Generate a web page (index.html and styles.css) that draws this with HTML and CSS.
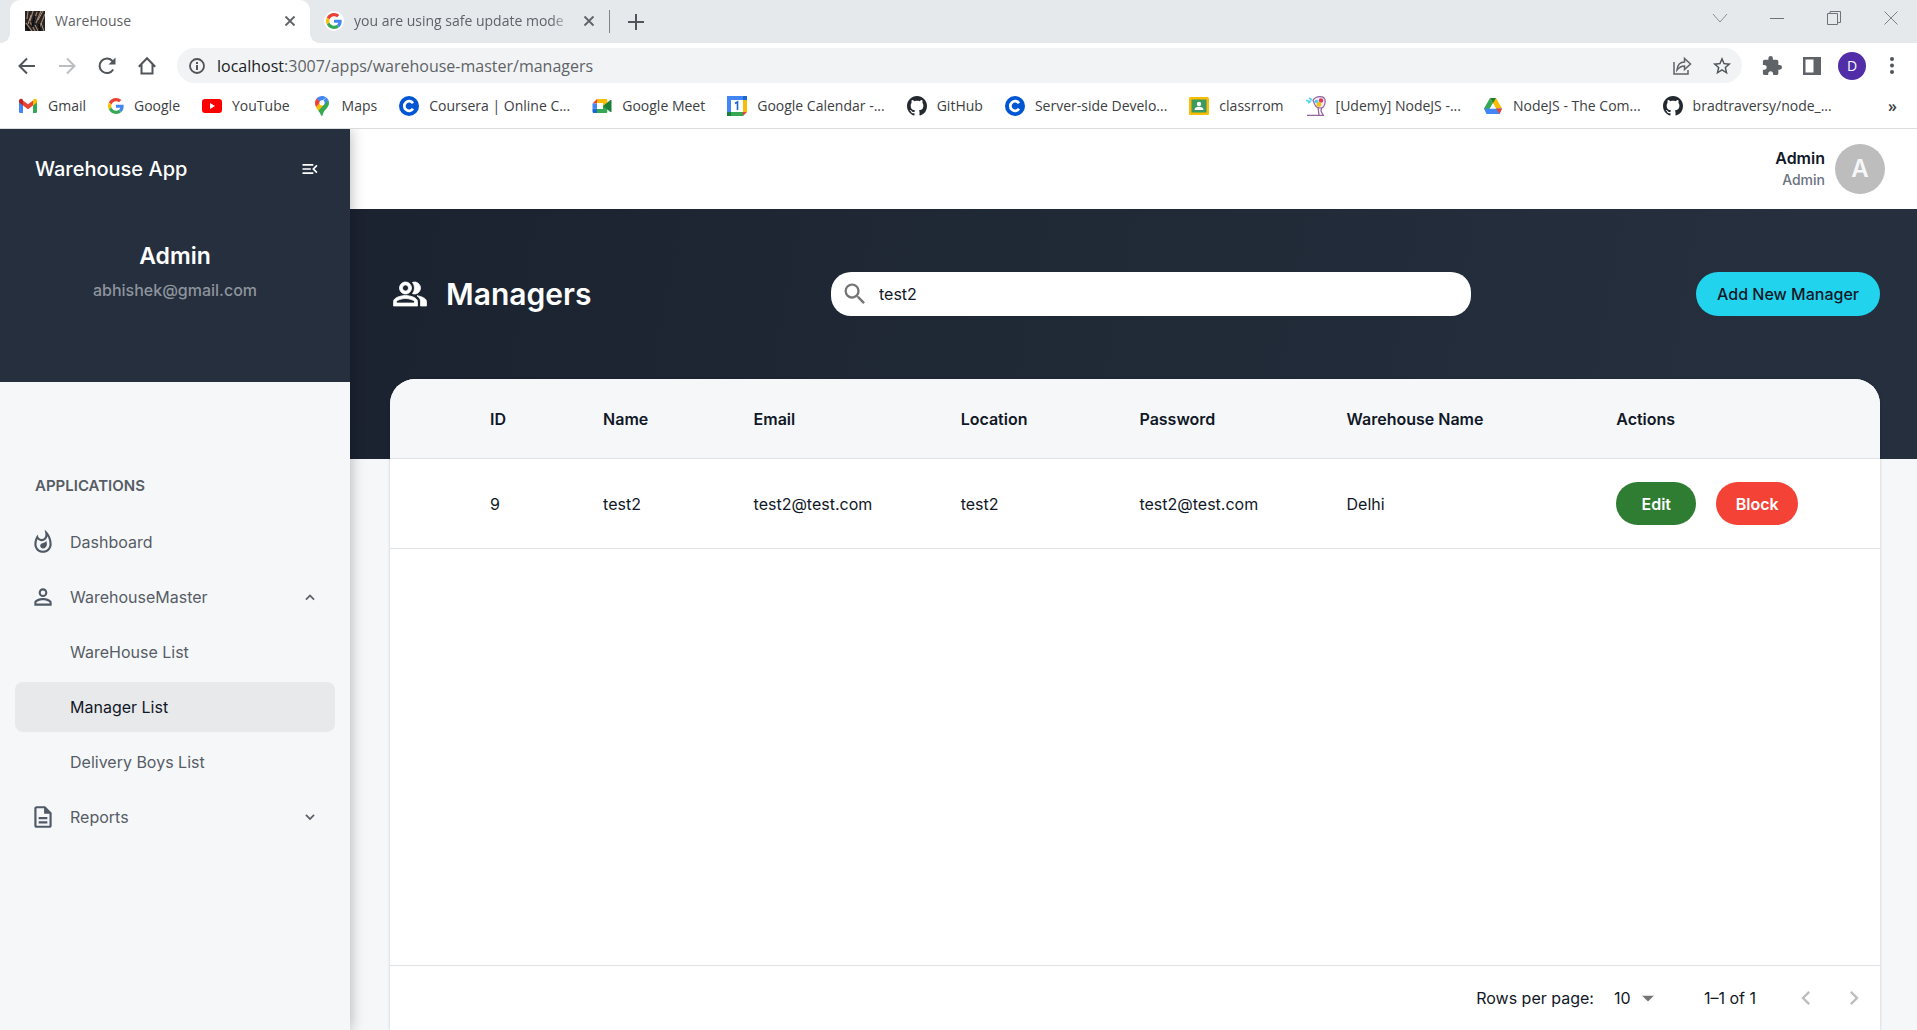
FILE: index.html
```html
<!DOCTYPE html>
<html lang="en">
<head>
<meta charset="utf-8">
<title>WareHouse</title>
<meta name="viewport" content="width=device-width, initial-scale=1">
<link rel="stylesheet" href="styles.css">
</head>
<body>
<svg class="defs" aria-hidden="true">
  <symbol id="i-google" viewBox="0 0 48 48">
    <path fill="#ea4335" d="M24 9.500c3.540 0 6.710 1.220 9.210 3.600l6.850-6.850C35.900 2.380 30.470 0 24 0 14.620 0 6.510 5.380 2.560 13.220l7.980 6.190C12.430 13.720 17.740 9.500 24 9.500z"/>
    <path fill="#4285f4" d="M46.980 24.550c0-1.570-.15-3.090-.38-4.550H24v9.020h12.940c-.58 2.960-2.260 5.480-4.780 7.180l7.730 6c4.510-4.180 7.090-10.360 7.090-17.650z"/>
    <path fill="#fbbc05" d="M10.530 28.590c-.48-1.450-.76-2.990-.76-4.590s.27-3.140.76-4.590l-7.980-6.190C.92 16.460 0 20.120 0 24c0 3.880.92 7.540 2.560 10.780l7.970-6.190z"/>
    <path fill="#34a853" d="M24 48c6.480 0 11.930-2.130 15.890-5.810l-7.730-6c-2.150 1.450-4.920 2.300-8.160 2.300-6.260 0-11.570-4.220-13.470-9.910l-7.980 6.190C6.510 42.620 14.620 48 24 48z"/>
  </symbol>
  <symbol id="i-coursera" viewBox="0 0 20 20">
    <circle cx="10" cy="10" r="10" fill="#0056d2"/>
    <path d="M14 7.200A4.800 4.800 0 1 0 14 12.800" fill="none" stroke="#fff" stroke-width="2.800"/>
  </symbol>
  <symbol id="i-github" viewBox="0 0 16 16">
    <path fill="#24292f" d="M8 0C3.580 0 0 3.580 0 8c0 3.540 2.290 6.530 5.470 7.590.4.070.55-.17.55-.38 0-.19-.01-.82-.01-1.490-2.010.37-2.530-.49-2.690-.94-.09-.23-.48-.94-.82-1.130-.28-.15-.68-.52-.01-.53.63-.01 1.080.58 1.230.82.72 1.210 1.870.87 2.330.66.07-.52.28-.87.51-1.070-1.780-.2-3.640-.89-3.640-3.950 0-.87.31-1.590.82-2.150-.08-.2-.36-1.020.08-2.120 0 0 .67-.21 2.200.82.64-.18 1.320-.27 2-.27s1.360.09 2 .27c1.530-1.040 2.200-.82 2.200-.82.44 1.100.16 1.920.08 2.120.51.56.82 1.270.82 2.150 0 3.070-1.870 3.750-3.650 3.950.29.25.54.73.54 1.480 0 1.070-.01 1.930-.01 2.200 0 .21.15.46.55.38A8.010 8.010 0 0 0 16 8c0-4.420-3.580-8-8-8z"/>
  </symbol>
  <symbol id="i-x" viewBox="0 0 12 12"><path d="M1.500 1.500l9 9M10.500 1.500l-9 9" fill="none" stroke="#5f6368" stroke-width="1.800"/></symbol>
</svg>

<header class="browser">
  <div class="tabs">
    <div class="tab tab-active">
      <svg class="ic20" viewBox="0 0 20 20"><rect width="20" height="20" fill="#2b2320"/><path d="M3 0l-1 8M8 0L5 10M12 1L8 13M16 0l-5 12M20 3l-6 15M1 12l6 8M5 11l5 9" stroke="#9a8474" stroke-width="1.200"/><path d="M6 4l-3 9M18 0l-5 9M10 14l3 6M16 12l3 8" stroke="#c9b6a2" stroke-width=".8"/><path d="M0 14l4 6M10 5L7 16M14 13l1 7" stroke="#0d0f16" stroke-width="2"/></svg>
      <span class="tab-title">WareHouse</span>
      <button class="plain" aria-label="Close tab"><svg class="ic12"><use href="#i-x"/></svg></button>
    </div>
    <div class="tab">
      <span class="tab-g"><svg class="ic16"><use href="#i-google"/></svg></span>
      <span class="tab-title fade">you are using safe update mode</span>
      <button class="plain" aria-label="Close tab"><svg class="ic12"><use href="#i-x"/></svg></button>
    </div>
    <button class="plain new-tab" aria-label="New tab"><svg class="ic16" viewBox="0 0 16 16"><path d="M8 0v16M0 8h16" stroke="#50555a" stroke-width="2"/></svg></button>
    <div class="win">
      <button class="plain" aria-label="Search tabs"><svg class="ic16" viewBox="0 0 16 16"><path d="M1 4l7 8 7-8" fill="none" stroke="#8b8f93"/></svg></button>
      <button class="plain" aria-label="Minimize"><svg class="ic16" viewBox="0 0 16 16"><path d="M1 8.500h14" stroke="#6f7377"/></svg></button>
      <button class="plain" aria-label="Restore"><svg class="ic16" viewBox="0 0 16 16"><path d="M1.500 3.500h10v11h-10zM4 3.500v-2h10.500v11h-3" fill="none" stroke="#6f7377"/></svg></button>
      <button class="plain" aria-label="Close"><svg class="ic16" viewBox="0 0 16 16"><path d="M1.500 1.500l13 13M14.500 1.500l-13 13" stroke="#7d8185"/></svg></button>
    </div>
  </div>

  <div class="toolbar">
    <button class="plain" aria-label="Back"><svg class="ic20" viewBox="0 0 20 20"><path d="M18 10H3M10 2.500L2.500 10l7.500 7.500" fill="none" stroke="#50555a" stroke-width="2"/></svg></button>
    <button class="plain" aria-label="Forward"><svg class="ic20" viewBox="0 0 20 20"><path d="M2 10h15M10 2.500l7.500 7.500-7.500 7.500" fill="none" stroke="#bcbfc2" stroke-width="2"/></svg></button>
    <button class="plain" aria-label="Reload"><svg class="ic20" viewBox="0 0 20 20"><path d="M16.200 13.500A7.300 7.300 0 1 1 15.600 5.200" fill="none" stroke="#50555a" stroke-width="2"/><path d="M18.500 1.500v7h-7z" fill="#50555a"/></svg></button>
    <button class="plain" aria-label="Home"><svg class="ic20" viewBox="0 0 20 20"><path d="M1.800 10.800L10 2.200l8.200 8.600M4.500 8.500v9h11v-9" fill="none" stroke="#50555a" stroke-width="2"/></svg></button>
    <div class="omnibox">
      <svg class="ic16" viewBox="0 0 16 16"><circle cx="8" cy="8" r="7" fill="none" stroke="#50555a" stroke-width="1.800"/><path d="M8 7v5M8 4v2" stroke="#50555a" stroke-width="2"/></svg>
      <span class="url"><b>localhost</b>:3007/apps/warehouse-master/managers</span>
      <button class="plain" aria-label="Share"><svg class="ic20" viewBox="0 0 20 20"><path d="M2 6v12h14v-4" fill="none" stroke="#5f6368" stroke-width="1.500"/><path d="M5 14c.5-5 3-8 7.500-8V2.500L18.500 8l-6 5.500V10C9 10 7 11.500 5 14z" fill="none" stroke="#5f6368" stroke-width="1.500"/></svg></button>
      <button class="plain" aria-label="Bookmark this page"><svg class="ic20" viewBox="1 1 22 22"><path fill="#50555a" d="M22 9.240l-7.190-.62L12 2 9.190 8.630 2 9.240l5.460 4.730L5.820 21 12 17.270 18.180 21l-1.630-7.030L22 9.240zM12 15.400l-3.760 2.270 1-4.280-3.320-2.880 4.380-.38L12 6.100l1.710 4.040 4.380.38-3.320 2.880 1 4.280L12 15.400z"/></svg></button>
    </div>
    <button class="plain" aria-label="Extensions"><svg class="ic20" viewBox="1 1 22 22"><path fill="#5f6368" d="M20.500 11H19V7c0-1.100-.9-2-2-2h-4V3.500a2.500 2.500 0 0 0-5 0V5H4c-1.100 0-2 .9-2 2v3.800h1.500c1.500 0 2.700 1.200 2.700 2.700S5 16.200 3.500 16.200H2V20c0 1.100.9 2 2 2h3.800v-1.500c0-1.500 1.200-2.700 2.700-2.700s2.700 1.200 2.700 2.700V22H17c1.100 0 2-.9 2-2v-4h1.500a2.500 2.500 0 0 0 0-5z"/></svg></button>
    <button class="plain" aria-label="Side panel"><svg class="ic20" viewBox="0 0 20 20"><path fill="#5f6368" d="M1 1h18v18H1zM3.500 3.500v13h8v-13z" fill-rule="evenodd"/></svg></button>
    <button class="profile" aria-label="Profile">D</button>
    <button class="plain" aria-label="Menu"><svg class="ic20" viewBox="0 0 20 20"><g fill="#50555a"><circle cx="10" cy="3" r="2"/><circle cx="10" cy="9.500" r="2"/><circle cx="10" cy="16" r="2"/></g></svg></button>
  </div>

  <nav class="bookmarks" aria-label="Bookmarks">
    <a href="#"><svg class="ic20" viewBox="0 0 20 20"><path fill="#4285f4" d="M1 5.500v10.300c0 .7.500 1.200 1.200 1.200H5V8.500z"/><path fill="#34a853" d="M15 8.500V17h2.800c.7 0 1.200-.5 1.200-1.200V5.500z"/><path fill="#ea4335" d="M5 9.500V4.500l5 3.800 5-3.800v5l-5 3.800z"/><path fill="#fbbc04" d="M15 4.500v5l4-3V5c0-1.900-2-2.800-3.500-1.800z"/><path fill="#c5221f" d="M1 5v1.500l4 3v-5l-.5-1.300C3 2.200 1 3.100 1 5z"/></svg>Gmail</a>
    <a href="#"><svg class="ic16"><use href="#i-google"/></svg>Google</a>
    <a href="#"><svg class="ic20" viewBox="0 0 20 20"><rect y="3" width="20" height="14" rx="3" fill="#f00"/><path fill="#fff" d="M8 7l5 3-5 3z"/></svg>YouTube</a>
    <a href="#"><svg class="ic20" viewBox="0 0 20 20"><path fill="#34a853" d="M10 20c.6 0 .8-2 1.500-3.500C13 13.500 17 11 17 7c0-1.200-.3-2.300-.8-3.200L6 14.500c1.300 1.600 2 2.500 2.700 4 .4.900.7 1.500 1.300 1.500z"/><path fill="#fbbc04" d="M4 11c.5 1.200 1.200 2.300 2.300 3.700l6.500-7L8 6z"/><path fill="#ea4335" d="M4.600 2.500C3.600 3.700 3 5.300 3 7c0 1.500.4 2.800 1 4l5-5.500z"/><path fill="#4285f4" d="M4.600 2.500L8.500 6l5.800-4.400C13.100.6 11.600 0 10 0 7.800 0 5.900 1 4.600 2.500z"/><path fill="#4285f4" d="M14.300 1.600L8.500 8l4 1 3.700-5.200c-.5-.9-1.100-1.600-1.900-2.200z"/><circle cx="10" cy="6.800" r="2.600" fill="#fff"/></svg>Maps</a>
    <a href="#"><svg class="ic20"><use href="#i-coursera"/></svg>Coursera | Online C...</a>
    <a href="#"><svg class="ic20" viewBox="0 0 20 20"><path fill="#fbbc04" d="M5 3h9c.8 0 1.300.5 1.300 1.300V9L11 10V7H5z"/><path fill="#ea4335" d="M5 3v4.500H.5z"/><path fill="#4285f4" d="M.5 7.500H5v5H.5z"/><path fill="#1967d2" d="M.5 12.500H5V17H2c-.9 0-1.500-.6-1.500-1.500z"/><path fill="#34a853" d="M5 13h6v-3l4.300-1v6.700c0 .8-.5 1.300-1.300 1.300H5z"/><path fill="#188038" d="M11 10l7.500-6c.4-.3 1-.1 1 .5v11c0 .6-.6.800-1 .5z"/></svg>Google Meet</a>
    <a href="#"><svg class="ic20" viewBox="0 0 20 20"><path fill="#4285f4" d="M0 0h16v4H4v12H0z"/><path fill="#1967d2" d="M16 0h4v4h-4z"/><path fill="#fbbc04" d="M16 4h4v12h-4z"/><path fill="#34a853" d="M4 16h12v4H4z"/><path fill="#188038" d="M0 16h4v4H0z"/><path fill="#ea4335" d="M16 16h4l-4 4z"/><path fill="#fff" d="M4 4h12v12H4z"/><path d="M8 7.500L10.500 6v8" fill="none" stroke="#1967d2" stroke-width="1.600"/></svg>Google Calendar -...</a>
    <a href="#"><svg class="ic20"><use href="#i-github"/></svg>GitHub</a>
    <a href="#"><svg class="ic20"><use href="#i-coursera"/></svg>Server-side Develo...</a>
    <a href="#"><svg class="ic20" viewBox="0 0 20 20"><rect y="1" width="20" height="18" rx="1.500" fill="#fbbc04"/><rect x="2.500" y="3.500" width="15" height="13" fill="#3c9a5f"/><circle cx="10" cy="8" r="2.200" fill="#fff"/><path fill="#fff" d="M5.500 14c0-2.500 2-3.200 4.500-3.200s4.500.7 4.500 3.200z"/></svg>classrrom</a>
    <a href="#"><svg class="ic20" viewBox="0 0 20 20"><path d="M7 4.500C8 1.500 12 0 16 .8c3 .7 3.500 3 3 6-.5 3-2 5-4 5.200-3 .2-5-1-6-3z" fill="#f7eef9" stroke="#94649e" stroke-width="1.200"/><path d="M12 11.500l1 7.500M15.500 12l-.5 3 2 4M1 19.400h17" fill="none" stroke="#94649e" stroke-width="1.300"/><path d="M0 4.500l4 1M3 2l3 2M2 7l3-2" stroke="#4fd4f0" stroke-width="1.600"/><circle cx="15" cy="4.500" r="2.200" fill="#e23b5a"/><circle cx="10.500" cy="5.500" r="1.800" fill="#3ecdf0"/><circle cx="13" cy="8.500" r="2.400" fill="#f4c20d"/></svg>[Udemy] NodeJS -...</a>
    <a href="#"><svg class="ic20" viewBox="0 0 20 20"><path fill="#34a853" d="M7 2L1 12.500 4 17l6-10z"/><path fill="#fbbc04" d="M7 2h6l6 10.500h-6z"/><path fill="#188038" d="M7 2h6l-3 5z"/><path fill="#4285f4" d="M1 12.500h18L16.500 18h-13z"/><path fill="#ea4335" d="M13 12.500h6L16.500 18z"/><path fill="#fff" d="M10 7.500l3 5H7z"/></svg>NodeJS - The Com...</a>
    <a href="#"><svg class="ic20"><use href="#i-github"/></svg>bradtraversy/node_...</a>
    <button class="plain more" aria-label="More bookmarks">»</button>
  </nav>
</header>

<div class="app">
  <aside class="sidebar">
    <div class="side-head">
      <div class="brand">
        <span>Warehouse App</span>
        <button class="plain" aria-label="Collapse menu"><svg class="ic20" viewBox="0 0 24 24"><path fill="#fff" d="M3 18h13v-2H3v2zM3 13h10v-2H3v2zm0-7v2h13V6H3zm18 9.590L17.420 12 21 8.410 19.590 7l-5 5 5 5L21 15.590z"/></svg></button>
      </div>
      <h2>Admin</h2>
      <p>abhishek@gmail.com</p>
    </div>
    <nav class="side-nav">
      <h3>APPLICATIONS</h3>
      <ul>
        <li><a href="#"><svg class="ic26" viewBox="0 0 24 24"><path fill="#4f5a66" d="M11.570 13.160c-1.360.28-2.170 1.160-2.170 2.410 0 1.340 1.110 2.420 2.490 2.420 2.050 0 3.710-1.660 3.710-3.710 0-1.070-.15-2.120-.46-3.120-.79 1.070-2.200 1.720-3.570 2zM13.500.67s.74 2.650.74 4.800c0 2.060-1.350 3.730-3.410 3.730-2.070 0-3.630-1.670-3.630-3.730l.03-.36C5.210 7.510 4 10.620 4 14c0 4.420 3.580 8 8 8s8-3.580 8-8C20 8.610 17.410 3.800 13.500.67zM12 20c-3.310 0-6-2.690-6-6 0-1.530.3-3.040.86-4.430 1.010 1.010 2.410 1.630 3.970 1.630 2.660 0 4.750-1.830 5.280-4.430C17.340 8.970 18 11.440 18 14c0 3.310-2.690 6-6 6z"/></svg><span>Dashboard</span></a></li>
        <li><a href="#"><svg class="ic26" viewBox="0 0 24 24"><path fill="#4f5a66" d="M12 5.900a2.100 2.100 0 1 1 0 4.200 2.100 2.100 0 0 1 0-4.200m0 9c2.970 0 6.100 1.460 6.100 2.100v1.100H5.900V17c0-.64 3.130-2.100 6.100-2.100M12 4C9.790 4 8 5.790 8 8s1.790 4 4 4 4-1.790 4-4-1.790-4-4-4zm0 9c-2.670 0-8 1.340-8 4v3h16v-3c0-2.660-5.330-4-8-4z"/></svg><span>WarehouseMaster</span><svg class="ic16" viewBox="0 0 24 24"><path fill="#5b6168" d="M12 8l-7 7 1.800 1.800L12 11.600l5.200 5.200L19 15z"/></svg></a></li>
        <li><a class="sub" href="#">WareHouse List</a></li>
        <li><a class="sub current" href="#" aria-current="page">Manager List</a></li>
        <li><a class="sub" href="#">Delivery Boys List</a></li>
        <li><a href="#"><svg class="ic26" viewBox="0 0 24 24"><path fill="#4f5a66" d="M8 16h8v2H8zm0-4h8v2H8zm6-10H6c-1.100 0-2 .9-2 2v16c0 1.100.89 2 1.990 2H18c1.100 0 2-.9 2-2V8l-6-6zm4 18H6V4h7v5h5v11z"/></svg><span>Reports</span><svg class="ic16" viewBox="0 0 24 24"><path fill="#5b6168" d="M12 16.800l-7-7L6.800 8l5.200 5.200L17.200 8 19 9.800z"/></svg></a></li>
      </ul>
    </nav>
  </aside>

  <main class="main">
    <div class="topbar">
      <div class="who"><strong>Admin</strong><span>Admin</span></div>
      <div class="avatar">A</div>
    </div>
    <div class="page">
      <div class="page-head">
        <h1><svg class="ic36" viewBox="0 0 24 24"><path fill="#fff" stroke="#fff" stroke-width=".5" d="M16.670 13.130C18.040 14.060 19 15.320 19 17v3h4v-3c0-2.180-3.570-3.470-6.330-3.870zM15 12c2.210 0 4-1.790 4-4s-1.790-4-4-4c-.47 0-.91.100-1.330.240a5.980 5.980 0 0 1 0 7.520c.42.140.86.240 1.330.240zM9 12c2.210 0 4-1.790 4-4s-1.790-4-4-4-4 1.790-4 4 1.790 4 4 4zm0-6c1.100 0 2 .9 2 2s-.9 2-2 2-2-.9-2-2 .9-2 2-2zM9 13c-2.670 0-8 1.340-8 4v3h16v-3c0-2.660-5.330-4-8-4zm6 5H3v-.990C3.200 16.290 6.300 15 9 15s5.800 1.290 6 2v1z"/></svg>Managers</h1>
        <label class="search">
          <svg class="ic28" viewBox="0 0 24 24"><path fill="#757575" d="M15.500 14h-.79l-.28-.27A6.470 6.470 0 0 0 16 9.500 6.500 6.500 0 1 0 9.500 16c1.610 0 3.090-.59 4.230-1.570l.27.280v.79l5 4.990L20.490 19l-4.990-5zm-6 0C7.010 14 5 11.990 5 9.500S7.010 5 9.500 5 14 7.010 14 9.500 11.990 14 9.500 14z"/></svg>
          <input type="text" value="test2" aria-label="Search">
        </label>
        <button class="add">Add New Manager</button>
      </div>
      <section class="card">
        <div class="table-wrap">
          <table>
            <colgroup><col class="c-id"><col class="c-name"><col class="c-email"><col class="c-loc"><col class="c-pass"><col class="c-wh"><col></colgroup>
            <thead><tr><th class="first">ID</th><th>Name</th><th>Email</th><th>Location</th><th>Password</th><th>Warehouse Name</th><th>Actions</th></tr></thead>
            <tbody><tr><td class="first">9</td><td>test2</td><td>test2@test.com</td><td>test2</td><td>test2@test.com</td><td>Delhi</td><td><div class="actions"><button class="edit">Edit</button><button class="block">Block</button></div></td></tr></tbody>
          </table>
        </div>
        <div class="pager">
          <label for="rows">Rows per page:</label>
          <span class="rows"><select id="rows"><option>10</option></select><svg class="ic28" viewBox="0 0 24 24"><path fill="#757575" d="M7 10l5 5 5-5z"/></svg></span>
          <span class="range">1–1 of 1</span>
          <button class="plain" aria-label="Previous page" disabled><svg class="ic28" viewBox="0 0 24 24"><path fill="#bdbdbd" d="M15.410 7.410L14 6l-6 6 6 6 1.410-1.410L10.830 12z"/></svg></button>
          <button class="plain" aria-label="Next page" disabled><svg class="ic28" viewBox="0 0 24 24"><path fill="#bdbdbd" d="M8.590 16.590L13.170 12 8.590 7.410 10 6l6 6-6 6z"/></svg></button>
        </div>
      </section>
    </div>
  </main>
</div>
</body>
</html>
```

FILE: styles.css
```css
*, *::before, *::after { box-sizing: border-box; }
body {
  margin: 0;
  height: 100vh;
  display: flex;
  flex-direction: column;
  overflow: hidden;
  font-family: Inter, "Liberation Sans", sans-serif;
  font-size: 16px;
  line-height: 20px;
  color: #111827;
}
button, input, select { font: inherit; color: inherit; }
h1, h2, h3, p, ul { margin: 0; padding: 0; }
ul { list-style: none; }
a { color: inherit; text-decoration: none; }
svg { display: block; flex: none; }
.defs { display: none; }
.plain { display: flex; align-items: center; justify-content: center; padding: 0; border: 0; background: none; flex: none; }
.ic12 { width: 12px; height: 12px; }
.ic16 { width: 16px; height: 16px; }
.ic20 { width: 20px; height: 20px; }
.ic26 { width: 26px; height: 26px; }
.ic28 { width: 28px; height: 28px; }
.ic36 { width: 36px; height: 36px; }

/* Browser chrome */
.browser {
  flex: none;
  background: #fff;
  border-bottom: 1px solid #dadcde;
  font-family: "Open Sans", "Noto Sans", sans-serif;
  color: #3c4043;
}
.tabs { display: flex; height: 43px; padding-left: 10px; background: #e5e9ec; }
.tab { display: flex; align-items: center; gap: 10px; width: 299px; padding: 0 14px 2px 14px; font-size: 14px; color: #5f6368; }
.tab-active { position: relative; width: 300px; padding-left: 15px; background: #fff; border-radius: 10px 10px 0 0; }
.tab-active::before, .tab-active::after {
  content: "";
  position: absolute;
  bottom: 0;
  width: 10px;
  height: 10px;
}
.tab-active::before { right: 100%; background: radial-gradient(circle at 0 0, transparent 10px, #fff 10px); }
.tab-active::after { left: 100%; background: radial-gradient(circle at 100% 0, transparent 10px, #fff 10px); }
.tab-title { flex: 1; min-width: 0; overflow: hidden; white-space: nowrap; }
.fade { mask-image: linear-gradient(90deg, #000 90%, transparent); }
.tab-g { display: grid; place-items: center; width: 20px; height: 20px; border-radius: 50%; background: #fff; }
.new-tab { margin: 10px 0; padding-left: 18px; border-left: 1px solid #808488; }
.win { display: flex; align-items: center; gap: 41px; height: 36px; margin-left: auto; padding-right: 18px; }
.toolbar { display: flex; align-items: center; gap: 20px; height: 45px; padding: 0 15px 0 17px; }
.omnibox { flex: 1; display: flex; align-items: center; gap: 20px; height: 35px; padding: 0 10px 0 12px; border-radius: 18px; background: #f1f3f4; }
.url { flex: 1; margin-left: -8px; font-size: 16px; color: #5f6368; }
.url b { font-weight: 400; color: #202124; }
.profile { width: 28px; height: 28px; margin: 0 -4px; padding: 0; border: 0; border-radius: 50%; background: #512da8; color: #fff; font-size: 14px; }
.bookmarks { display: flex; align-items: center; height: 40px; padding: 0 20px 4px 18px; gap: 22px; font-size: 14px; white-space: nowrap; }
.bookmarks a { display: flex; align-items: center; gap: 10px; }
.bookmarks .more { margin-left: auto; font-size: 16px; font-weight: 600; }

/* Application shell */
.app { flex: 1; min-height: 0; display: flex; overflow: hidden; }
.sidebar {
  z-index: 1;
  flex: none;
  width: 350px;
  background: #f6f7f9;
  box-shadow: 0 0 14px rgba(0, 0, 0, .3);
}
.side-head { height: 253px; background: #252f3e; color: #fff; text-align: center; }
.brand { display: flex; align-items: center; justify-content: space-between; height: 80px; padding: 0 30px 0 35px; font-size: 20px; font-weight: 500; }
.side-head h2 { margin-top: 31px; font-size: 23px; line-height: 32px; font-weight: 600; }
.side-head p { margin-top: 8px; font-weight: 500; color: #8e949c; }
.side-nav { padding: 94px 15px 0; color: #565d66; }
.side-nav h3 { height: 20px; padding-left: 20px; font-size: 15px; font-weight: 600; }
.side-nav ul { display: flex; flex-direction: column; gap: 5px; margin-top: 21px; }
.side-nav a { display: flex; align-items: center; gap: 14px; height: 50px; padding: 0 17px 0 15px; border-radius: 8px; }
.side-nav a span { flex: 1; }
.side-nav .sub { padding-left: 55px; }
.side-nav .current { background: #e8e9eb; color: #111827; }

.main { flex: 1; min-width: 0; display: flex; flex-direction: column; }
.topbar { display: flex; align-items: center; justify-content: flex-end; gap: 10px; flex: none; height: 80px; padding-right: 32px; background: #fff; }
.who { display: flex; flex-direction: column; align-items: flex-end; gap: 2px; }
.who strong { font-weight: 600; }
.who span { font-size: 14px; font-weight: 500; color: #6b7280; }
.avatar { display: grid; place-items: center; width: 50px; height: 50px; border-radius: 50%; background: #bdbdbd; color: #f6f7f9; font-size: 24px; font-weight: 600; }
.page {
  flex: 1;
  min-height: 0;
  display: flex;
  flex-direction: column;
  padding: 0 37px 0 40px;
  background: linear-gradient(100deg, #1b2230, #1e2733 30%, #252f3e 90%) top / 100% 250px no-repeat #f6f7f9;
}
.page-head { flex: none; display: flex; align-items: center; justify-content: space-between; height: 170px; }
.page-head h1 { display: flex; align-items: center; gap: 18px; width: 225px; padding-left: 2px; color: #fff; font-size: 30px; font-weight: 600; }
.search { display: flex; align-items: center; gap: 8px; width: 640px; height: 44px; margin-right: 9px; padding: 0 10px; border-radius: 20px; background: #fff; }
.search input { flex: 1; min-width: 0; padding: 0 2px; border: 0; outline: 0; background: none; }
.add { width: 184px; height: 44px; border: 0; border-radius: 22px; background: #22d3ee; font-weight: 500; }

.card { flex: 1; min-height: 0; display: flex; flex-direction: column; overflow: hidden; border-radius: 25px 25px 0 0; background: #fff; box-shadow: 0 0 3px rgba(0, 0, 0, .2); }
.table-wrap { flex: 1; min-height: 0; overflow: hidden; }
table { width: 100%; border-collapse: separate; border-spacing: 0; table-layout: fixed; }
.c-id { width: 14.3%; }
.c-name { width: 10.1%; }
.c-email { width: 13.9%; }
.c-loc { width: 12%; }
.c-pass { width: 13.9%; }
.c-wh { width: 18.1%; }
th, td { padding: 0; text-align: left; border-bottom: 1px solid #e0e2e5; }
th { height: 80px; background: #f6f7f9; font-weight: 600; }
td { height: 90px; }
.first { padding-left: 100px; }
.actions { display: flex; gap: 20px; }
.actions button { width: 80px; height: 43px; padding: 0; border: 0; border-radius: 22px; color: #fff; font-weight: 600; }
.edit { background: #2e7d32; }
.actions .block { width: 82px; background: #f44336; }
.pager { flex: none; display: flex; align-items: center; justify-content: flex-end; gap: 20px; height: 65px; padding-right: 12px; border-top: 1px solid #e0e2e5; }
.rows { display: flex; align-items: center; }
.rows select { width: 20px; padding: 0; border: 0; appearance: none; background: none; }
.range { margin: 0 16px 0 22px; }
```
